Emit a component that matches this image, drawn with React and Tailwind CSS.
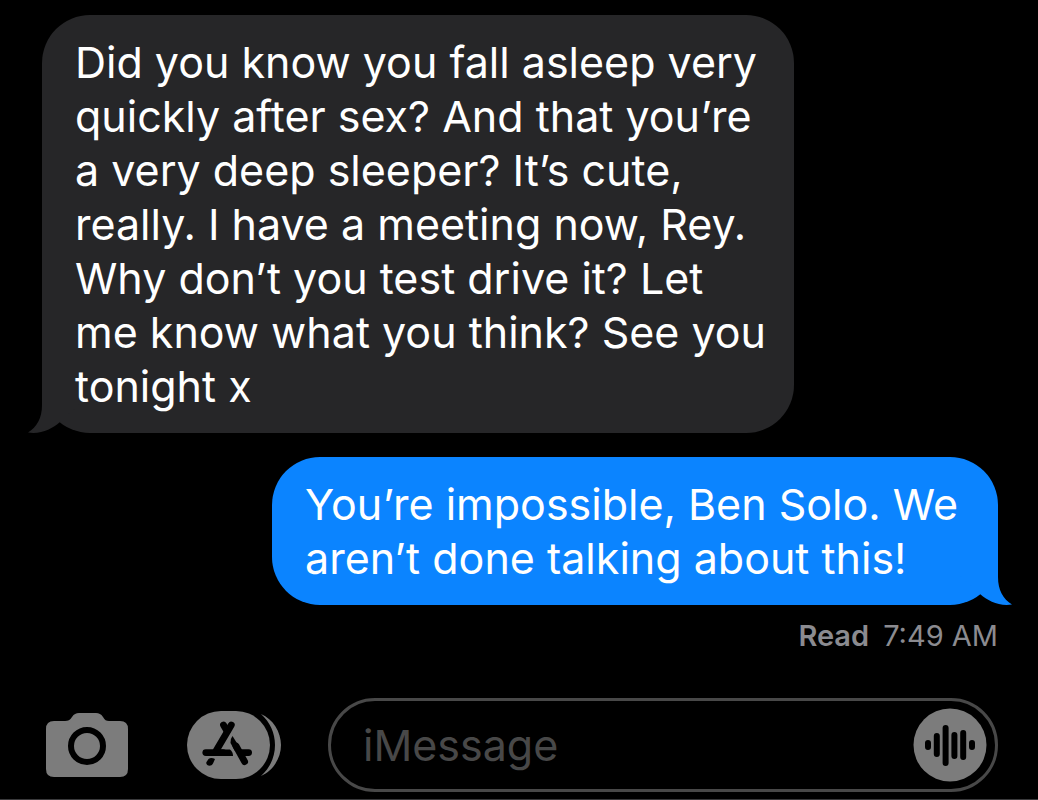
import React, { useState } from 'react';

const messages = [
    {
        id: 1,
        from: 'them',
        lines: [
            'Did you know you fall asleep very',
            'quickly after sex? And that you’re',
            'a very deep sleeper? It’s cute,',
            'really. I have a meeting now, Rey.',
            'Why don’t you test drive it? Let',
            'me know what you think? See you',
            'tonight x',
        ],
    },
    {
        id: 2,
        from: 'me',
        lines: ['You’re impossible, Ben Solo. We', 'aren’t done talking about this!'],
    },
];

const Tail = ({ className }) => (
    <svg viewBox="0 0 62 48" className={`absolute bottom-0 w-[62px] h-12 fill-current ${className}`} aria-hidden="true">
        <path d="M14 0V20C14 33 9 42 0 47.5C13 49.5 24 44 32 37L62 10V0Z" />
    </svg>
);

const Bubble = ({ message }) => {
    const mine = message.from === 'me';

    return (
        <div className={`flex ${mine ? 'justify-end' : 'justify-start'}`}>
            <div
                className={`relative rounded-[48px] py-5 pl-[33px] text-[43px] leading-[54px] ${mine
                    ? 'bg-[#0b84ff] pr-10'
                    : 'bg-[#262628] pr-7'
                    }`}
            >
                <Tail className={mine ? '-right-3.5 -scale-x-100 text-[#0b84ff]' : '-left-3.5 text-[#262628]'} />
                <p className="relative text-white">
                    {message.lines.map((line) => (
                        <span key={line} className="block whitespace-nowrap">{line} </span>
                    ))}
                </p>
            </div>
        </div>
    );
};

const CameraIcon = () => (
    <svg viewBox="0 0 82 64" className="w-[82px] h-16" aria-hidden="true">
        <path
            fill="#7c7c7c"
            d="M8 8H19C22 8 24 7 26 4C28 1 30 0 33 0H50C53 0 55 1 57 4C59 7 60 8 63 8H74Q82 8 82 16V56Q82 64 74 64H8Q0 64 0 56V16Q0 8 8 8Z"
        />
        <circle cx="41" cy="33" r="16" fill="none" stroke="#000" strokeWidth="6" />
    </svg>
);

const AppStoreIcon = () => (
    <svg viewBox="0 0 94 68" className="w-[94px] h-[68px]" aria-hidden="true">
        <path fill="#7c7c7c" d="M74 3C86 8 94 21 94 34S86 60 74 65C83 57 88 46 88 34S83 11 74 3Z" />
        <rect width="83" height="68" rx="34" fill="#7c7c7c" />
        <g fill="none" stroke="#000" strokeWidth="6.8" strokeLinecap="round">
            <path d="M44.3 14L29 40" />
            <path d="M36.5 14L40 20" />
            <path d="M18.8 41.6H36" />
            <path d="M55 41.6H61.6" />
            <path d="M49 35L57.6 50.6" />
        </g>
        <path d="M31 38.4H43Q46 40.5 46 45H31Z" />
        <path d="M45.5 25L53 37L48 40L43.5 32Q43 28 45.5 25Z" />
        <path d="M21.5 48Q24 46.2 28 48L26 52.5C24 56.5 18 54.5 19.5 51Z" />
    </svg>
);

const AudioIcon = () => (
    <svg viewBox="0 0 74 74" className="w-[74px] h-[74px]" aria-hidden="true">
        <circle cx="37" cy="37" r="36.5" fill="#7c7c7c" />
        <path
            stroke="#000"
            strokeWidth="6"
            strokeLinecap="round"
            d="M15 35V39M23.8 28V46M32.6 20V55M41.4 27V48M50.2 25V49M59 35V39"
        />
    </svg>
);

const Composer = () => {
    const [text, setText] = useState('');

    return (
        <form
            className="mt-auto flex items-center pl-[46px] pr-10 pb-[7px] border-b border-[#3a3a3c]"
            onSubmit={(e) => e.preventDefault()}
        >
            <button type="button" aria-label="Camera" className="shrink-0">
                <CameraIcon />
            </button>
            <button type="button" aria-label="Apps" className="shrink-0 ml-[59px]">
                <AppStoreIcon />
            </button>
            <div className="ml-[47px] flex flex-1 min-w-0 h-[94px] items-center rounded-full border-[3px] border-[#484848] pl-8 pr-2">
                <input
                    type="text"
                    aria-label="iMessage"
                    placeholder="iMessage"
                    value={text}
                    onChange={(e) => setText(e.target.value)}
                    className="flex-1 min-w-0 bg-transparent text-[43px] leading-[54px] text-white placeholder-[#484848] focus:outline-none"
                />
                <button type="button" aria-label="Record audio" className="shrink-0">
                    <AudioIcon />
                </button>
            </div>
        </form>
    );
};

export default function App() {
    return (
        <main className="flex min-h-screen flex-col bg-black font-['Inter',sans-serif]">
            <section className="flex flex-col gap-6 pt-[15px] pl-[42px] pr-10">
                {messages.map((message) => (
                    <Bubble key={message.id} message={message} />
                ))}
            </section>
            <p className="mt-[13px] pr-10 text-right text-[29px] leading-9 text-[#8b8b90]">
                <span className="mr-3.5 font-semibold">Read</span>
                <time>7:49 AM</time>
            </p>
            <Composer />
        </main>
    );
}
